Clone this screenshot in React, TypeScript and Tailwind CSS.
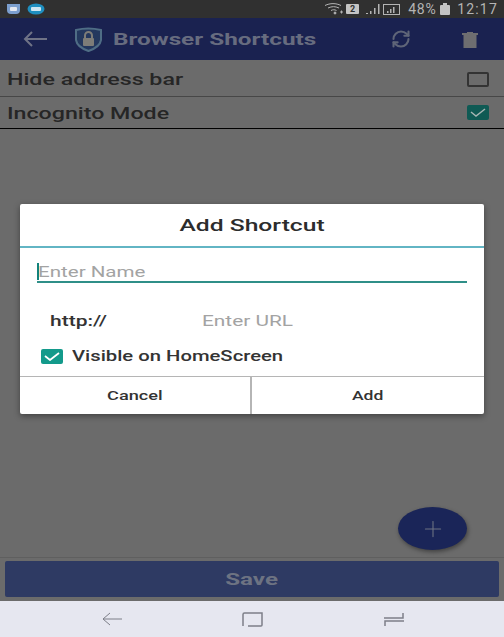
import { Plus, RefreshCw } from "lucide-react";

const font = { fontFamily: "Roboto, sans-serif" };

function WideCheck({ color, width }: { color: string; width: number }) {
  return (
    <svg width="16" height="9" viewBox="0 0 16 9" fill="none" stroke={color} strokeWidth={width}>
      <path d="M1 4l5 4 9-7" />
    </svg>
  );
}

function ToolbarIcons() {
  return (
    <div className="ml-auto flex items-center">
      <RefreshCw className="h-[20px] w-[20px] text-[#5f6578] mr-[51px]" strokeWidth={2.500} />
      <svg width="16" height="16" viewBox="0 0 16 16" className="mr-[26px] mt-px">
        <rect x="1.500" y="3" width="13" height="13" fill="#6e6e70" />
        <rect x="0" y="1" width="16" height="2" fill="#6e6e70" />
        <rect x="5" y="0" width="6" height="2" fill="#6e6e70" />
      </svg>
    </div>
  );
}

function StatusBar() {
  return (
    <div className="h-[18px] bg-[#303030] flex items-center px-[5px] shrink-0 text-[#b4b4b4]">
      <svg width="15" height="12" viewBox="0 0 15 12" className="ml-px">
        <path d="M1 1h13v6a4 4 0 0 1-4 4H5a4 4 0 0 1-4-4z" fill="#7c9fce" />
        <rect x="4" y="4" width="7" height="4" rx="1" fill="#e4e8f0" />
      </svg>
      <svg width="18" height="12" viewBox="0 0 18 12" className="ml-[6px]">
        <ellipse cx="9" cy="6" rx="8.500" ry="5.500" fill="#1f8fc0" />
        <rect x="4" y="4" width="10" height="4" rx="1" fill="#cfe6f2" />
      </svg>
      <div className="ml-auto flex items-center">
        <svg width="20" height="12" viewBox="0 0 20 12" fill="none" stroke="#b4b4b4" strokeWidth="1">
          <path d="M1 2.500C6 0 12 0 17 2.500M4 5C8 3.200 11 3.200 15 5M7 7.500c2-1 3.500-1 5.500 0" />
          <circle cx="11" cy="10" r="1" fill="#b4b4b4" />
          <path d="M16 9h3M17.500 7.500v3" />
        </svg>
        <span className="ml-[2px] w-[13px] h-[10px] bg-[#c4c4c4] rounded-[1px] text-[#303030] text-[9px] leading-[10px] text-center font-bold">2</span>
        <svg width="35" height="13" viewBox="0 0 35 13" className="ml-[7px]" fill="#b4b4b4">
          <rect x="0" y="10" width="2" height="1" />
          <rect x="4" y="8" width="1.500" height="3" />
          <rect x="8" y="5" width="1.500" height="6" />
          <rect x="12" y="1" width="1.500" height="10" />
          <rect x="17.500" y="1.500" width="16" height="10" fill="none" stroke="#b4b4b4" />
          <rect x="21" y="8" width="1.500" height="2" />
          <rect x="24" y="6" width="1.500" height="4" />
          <rect x="27" y="4" width="1.500" height="6" />
        </svg>
        <span className="ml-[7px] w-[30px] text-[14px] tracking-[0.800px] leading-none">48%</span>
        <svg width="10" height="12" viewBox="0 0 10 12" className="ml-[2px]" fill="#c4c4c4">
          <rect x="3" y="0" width="4" height="2" />
          <rect x="0" y="2" width="10" height="10" rx="1" />
        </svg>
        <span className="ml-[7px] mr-[1px] text-[14px] tracking-[1.200px] leading-none">12:17</span>
      </div>
    </div>
  );
}

function Toolbar() {
  return (
    <div className="h-[42px] bg-[#1a2250] flex items-center shrink-0">
      <svg width="24" height="16" viewBox="0 0 24 16" fill="none" stroke="#6f7386" strokeWidth="2" className="ml-[23px]">
        <path d="M24 8H2M9 1 2 8l7 7" />
      </svg>
      <svg width="29" height="25" viewBox="0 0 29 25" className="ml-[27px]">
        <path d="M2 3Q14 0 27 3V13Q26 20 14.500 24Q3 20 2 13Z" fill="#23385e" stroke="#4f6d85" strokeWidth="2" />
        <rect x="9" y="11" width="11" height="8" rx="1" fill="#7d7d78" />
        <path d="M11 11V8.500a3.500 3.500 0 0 1 7 0V11" fill="none" stroke="#7d7d78" strokeWidth="2" />
      </svg>
      <span className="ml-[10px] pt-[2px] inline-block origin-left scale-x-[1.430] text-[17px] font-bold text-[#676c7f]">Browser Shortcuts</span>
      <ToolbarIcons />
    </div>
  );
}

function SettingRow({ label, checked, border }: { label: string; checked?: boolean; border: string }) {
  return (
    <div className={`flex items-center pl-[7px] pr-[15px] border-b ${border} ${checked ? "h-[32px]" : "h-[37px] pt-[2px]"}`}>
      <span className={`inline-block origin-left scale-x-[1.450] text-[16px] font-medium text-[#262626] ${checked ? "pt-[2px]" : "pt-px"}`}>{label}</span>
      {checked ? (
        <span className="ml-auto w-[22px] h-[15px] rounded-[2px] bg-[#0f5a54] flex items-center justify-center">
          <WideCheck color="#a6b5b3" width={1.500} />
        </span>
      ) : (
        <span className="ml-auto w-[22px] h-[15px] rounded-[2px] border-2 border-[#333333]" />
      )}
    </div>
  );
}

function Dialog() {
  return (
    <div className="absolute left-[20px] top-[204px] w-[464px] h-[210px] bg-white rounded-[2px] flex flex-col shadow-[0_2px_6px_rgba(0,0,0,0.4)]">
      <div className="h-[44px] flex items-center justify-center border-b-2 border-[#62b5c4] shrink-0 pt-px">
        <span className="inline-block scale-x-[1.450] text-[17px] font-medium text-[#2c2c2c]">Add Shortcut</span>
      </div>
      <div className="mx-[17px] mt-[13px] h-[22px] border-b-2 border-[#2f8f88] flex items-center shrink-0">
        <span className="w-[2px] h-[17px] bg-[#13827a] mt-px" />
        <span className="-ml-px pt-[3px] inline-block origin-left scale-x-[1.370] text-[15px] text-[#a3a3a3]">Enter Name</span>
      </div>
      <div className="flex items-center mt-[26px] h-[24px] shrink-0">
        <span className="ml-[30px] w-[152px]">
          <span className="inline-block origin-left scale-x-[1.400] text-[15px] font-medium text-[#333333]">http://</span>
        </span>
        <span className="inline-block origin-left scale-x-[1.390] text-[15px] text-[#a3a3a3]">Enter URL</span>
      </div>
      <div className="flex items-center mt-[11px] ml-[21px] h-[24px] shrink-0">
        <span className="w-[22px] h-[15px] rounded-[2px] bg-[#139a8b] flex items-center justify-center">
          <WideCheck color="#ffffff" width={1.800} />
        </span>
        <span className="ml-[9px] inline-block origin-left scale-x-[1.350] text-[15px] font-medium text-[#333333]">Visible on HomeScreen</span>
      </div>
      <div className="mt-auto h-[38px] border-t border-[#b5b5b5] flex shrink-0">
        <div className="w-[232px] flex items-center justify-center border-r-2 border-[#b5b5b5] text-[#333333]">
          <span className="inline-block scale-x-[1.400] text-[13px] font-medium">Cancel</span>
        </div>
        <div className="flex-1 flex items-center justify-center text-[#333333]">
          <span className="inline-block scale-x-[1.350] text-[13px] font-medium">Add</span>
        </div>
      </div>
    </div>
  );
}

export default function App() {
  return (
    <div className="relative w-[504px] h-[637px] overflow-hidden flex flex-col bg-[#6b6b6b]" style={font}>
      <StatusBar />
      <Toolbar />
      <SettingRow label="Hide address bar" border="border-[#474747]" />
      <SettingRow label="Incognito Mode" checked border="border-black" />
      <div className="mt-auto border-t border-[#5f5f5f] h-[44px] shrink-0 px-[5px] pt-[3px]">
        <div className="h-[36px] rounded-[2px] bg-[#2e3a63] flex items-center justify-center pt-[2px]">
          <span className="inline-block scale-x-[1.420] text-[17px] font-bold text-[#6d7382]">Save</span>
        </div>
      </div>
      <div className="h-[36px] bg-[#e6e7f0] flex items-center shrink-0">
        <svg width="20" height="14" viewBox="0 0 20 14" fill="none" stroke="#7d7f88" strokeWidth="1" className="ml-[102px]">
          <path d="M20 7H1M8 1 1 7l7 6" />
        </svg>
        <svg width="21" height="15" viewBox="0 0 21 15" fill="none" stroke="#7d7f88" strokeWidth="1.500" className="ml-[120px]">
          <path d="M1 14V2.500Q1 1 2.500 1H20V13Q20 14 19 14H6" />
        </svg>
        <svg width="20" height="15" viewBox="0 0 20 15" fill="none" stroke="#7d7f88" strokeWidth="1.500" className="ml-[121px]">
          <path d="M0 6h19V1M20 9H1v5" />
        </svg>
      </div>
      <Dialog />
      <div className="absolute left-[398px] top-[507px] w-[69px] h-[43px] rounded-[50%] bg-[#1a2558] flex items-center justify-center shadow-[1px_2px_4px_rgba(0,0,0,0.4)]">
        <Plus className="w-[26px] h-[26px] text-[#6d7382]" strokeWidth={1} />
      </div>
    </div>
  );
}
